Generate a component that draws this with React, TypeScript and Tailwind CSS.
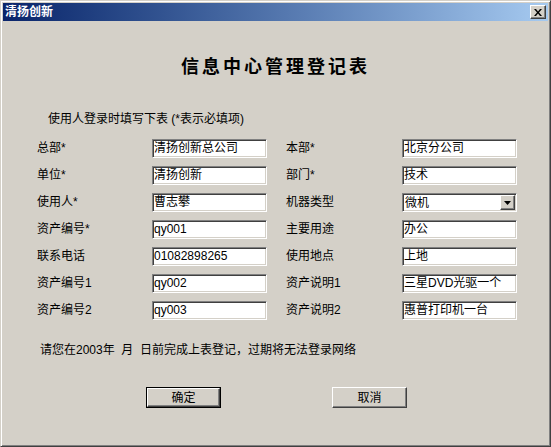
import React from "react";

const FONT = '"Liberation Sans", "Noto Sans CJK SC", sans-serif';

const sunken =
  "border border-t-[#808080] border-l-[#808080] border-b-white border-r-white shadow-[inset_1px_1px_0_#404040,inset_-1px_-1px_0_#d4d0c8] bg-white";
const raised =
  "border border-t-white border-l-white border-b-[#404040] border-r-[#404040] shadow-[inset_-1px_-1px_0_#808080,inset_1px_1px_0_#d4d0c8] bg-[#d4d0c8]";

const rows: [string, string, string, string][] = [
  ["总部*", "清扬创新总公司", "本部*", "北京分公司"],
  ["单位*", "清扬创新", "部门*", "技术"],
  ["使用人*", "曹志攀", "机器类型", "微机"],
  ["资产编号*", "qy001", "主要用途", "办公"],
  ["联系电话", "01082898265", "使用地点", "上地"],
  ["资产编号1", "qy002", "资产说明1", "三星DVD光驱一个"],
  ["资产编号2", "qy003", "资产说明2", "惠普打印机一台"],
];

function Field({ value }: { value: string }) {
  return (
    <div className={`${sunken} h-[19px] w-[115px] shrink-0 pl-[1px] text-[12px] leading-[16px] whitespace-nowrap overflow-hidden`}>
      {value}
    </div>
  );
}

function Select({ value }: { value: string }) {
  return (
    <div className={`${sunken} flex h-[19px] w-[115px] shrink-0 items-center justify-between pl-[2px] text-[12px] leading-[16px]`}>
      <span>{value}</span>
      <div className={`${raised} mr-[1px] flex h-[15px] w-[15px] items-center justify-center`}>
        <svg width="7" height="4" viewBox="0 0 7 4">
          <path d="M0 0h7L3.5 4z" fill="#000" />
        </svg>
      </div>
    </div>
  );
}

export default function App() {
  return (
    <div
      className="flex h-[447px] w-[551px] flex-col border border-t-[#d4d0c8] border-l-[#d4d0c8] border-b-[#404040] border-r-[#404040] bg-[#d4d0c8] p-[2px] text-black shadow-[inset_1px_1px_0_#fff,inset_-1px_-1px_0_#808080]"
      style={{ fontFamily: FONT }}
    >
      {/* title bar */}
      <div className="flex h-[18px] items-center justify-between bg-gradient-to-r from-[#0a246a] to-[#a6caf0] pl-[2px] pr-[2px]">
        <span className="text-[12px] font-bold leading-[18px] text-white">清扬创新</span>
        <div className={`${raised} flex h-[14px] w-[16px] items-center justify-center`}>
          <svg width="8" height="7" viewBox="0 0 8 7">
            <path d="M0 0h2l2 2.5L6 0h2L5 3.5 8 7H6L4 4.5 2 7H0l3-3.5z" fill="#000" />
          </svg>
        </div>
      </div>

      {/* heading */}
      <div className="mt-[34px] text-center text-[18px] font-bold leading-[24px] tracking-[3px]">
        信息中心管理登记表
      </div>

      <div className="mt-[32px] pl-[45px] text-[12px] leading-[16px]">使用人登录时填写下表 (*表示必填项)</div>

      {/* form */}
      <div className="mt-[12px] flex flex-col gap-[8px] pl-[34px] text-[12px] leading-[16px]">
        {rows.map(([l1, v1, l2, v2]) => (
          <div key={l1} className="flex items-start">
            <div className="w-[115px] shrink-0 pt-[1px]">{l1}</div>
            <Field value={v1} />
            <div className="ml-[19px] w-[116px] shrink-0 pt-[1px]">{l2}</div>
            {l2 === "机器类型" ? <Select value={v2} /> : <Field value={v2} />}
          </div>
        ))}
      </div>

      <div className="mt-[22px] pl-[37px] text-[12px] leading-[16px] whitespace-pre">
        请您在2003年  月  日前完成上表登记，过期将无法登录网络
      </div>

      {/* buttons */}
      <div className="mt-[29px] flex pl-[143px] text-[12px]">
        <div className="border border-black">
          <div className={`${raised} flex h-[19px] w-[73px] items-center justify-center leading-[16px]`}>确定</div>
        </div>
        <div className={`${raised} ml-[111px] flex h-[21px] w-[75px] items-center justify-center leading-[16px]`}>取消</div>
      </div>
    </div>
  );
}
